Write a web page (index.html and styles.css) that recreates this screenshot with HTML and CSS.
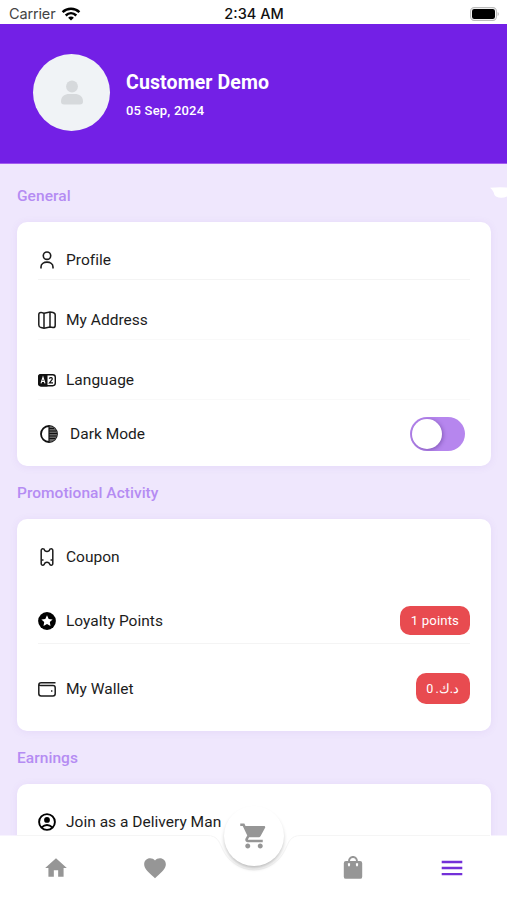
FILE: index.html
```html
<!DOCTYPE html>
<html lang="en">
<head>
<meta charset="utf-8">
<title>Menu</title>
<link rel="stylesheet" href="styles.css">
</head>
<body>
<div class="app">
  <div class="status">
    <div class="carrier"><span>Carrier</span>
      <svg width="20" height="14" viewBox="0 0 20 14" fill="none" stroke="#000" stroke-width="2.5"><path d="M1.6 5.1C6.300 .600 13.700 .600 18.400 5.100M4.700 8.500C7.800 5.600 12.200 5.600 15.300 8.500"/><path d="M7.100 10.700C8.700 9.100 11.300 9.100 12.900 10.700L10 13.500Z" fill="#000" stroke="none"/></svg>
    </div>
    <span class="time">2:34 AM</span>
    <svg class="battery" width="29" height="14" viewBox="0 0 29 14"><rect x=".6" y=".6" width="25.800" height="12.800" rx="3.600" fill="#fff" stroke="#bbb" stroke-width="1.100"/><rect x="2" y="2" width="23" height="10" rx="2.200"/><path d="M27.600 5v4q1.300-.7 1.300-2t-1.300-2z" fill="#bbb"/></svg>
  </div>
  <header class="header">
    <div class="avatar">
      <svg width="24" height="26" viewBox="0 0 24 26" fill="#d6d9dc"><circle cx="12" cy="6.500" r="5.900"/><path d="M1 21.500C1 16 5 14 9 14h6c4 0 8 2 8 7.500Q23 24.500 20 24.500H4Q1 24.500 1 21.500Z"/></svg>
    </div>
    <div>
      <div class="name">Customer Demo</div>
      <div class="date">05 Sep, 2024</div>
    </div>
  </header>
  <main class="main">
    <svg class="corner" width="17" height="12" viewBox="0 0 17 12" fill="#fff"><path d="M0 .8Q8 0 17 .5V9.500Q11 12 6 9.500Q4 8 3.500 5Q2 2 0 .8Z"/></svg>
    <h2 class="title">General</h2>
    <section class="card general">
      <div class="row line">
        <svg class="icon" viewBox="0 0 18 18" fill="none" stroke="#1c1c1c" stroke-width="1.600"><circle cx="9" cy="4.700" r="3.700"/><path d="M3 17.500V16C3 9.500 15 9.500 15 16v1.500"/></svg>
        <span>Profile</span>
      </div>
      <div class="row line faint">
        <svg class="icon" viewBox="0 0 18 18" fill="none" stroke="#1c1c1c" stroke-width="1.500" stroke-linejoin="round"><path d="M.8 3.500Q.8 1.500 3 1.400L6 2.200L12 1L15 1.500Q17.200 2 17.200 4V14.500Q17.200 16.600 15 16.600L12 16L6 17.200L3 16.600Q.8 16 .8 14Z"/><path d="M6 2.200V17M12 1V16"/></svg>
        <span>My Address</span>
      </div>
      <div class="row line faint">
        <svg class="icon" viewBox="0 0 18 18" fill="none"><rect x=".7" y="3.700" width="16.600" height="11" rx="2.600" stroke="#111" stroke-width="1.400"/><path d="M9.500 3H3Q0 3 0 6v6.500Q0 15.400 3 15.400H9.500Z" fill="#111"/><path d="M3 12.300L5 6.300L7 12.300M3.700 10.500H6.300" stroke="#fff" stroke-width="1.100"/><path d="M11.300 7.600Q12 6.300 13.300 6.600Q15 7.300 13.800 9L11.500 11.800H15" stroke="#111" stroke-width="1.200"/></svg>
        <span>Language</span>
      </div>
      <div class="row dark">
        <svg class="icon" viewBox="0 0 18 18" fill="none"><circle cx="9" cy="9" r="8" stroke="#111" stroke-width="1.800"/><path d="M9 1V17A8 8 0 0 0 9 1Z" fill="#666"/><path d="M9 1V17M9 3.500h5M9 6h7M9 8.500h8M9 11h7.500M9 13.500h6" stroke="#111" stroke-width="1.200"/></svg>
        <span>Dark Mode</span>
        <div class="toggle"><div class="knob"></div></div>
      </div>
    </section>
    <h2 class="title promo-title">Promotional Activity</h2>
    <section class="card promo">
      <div class="row">
        <svg class="icon" viewBox="0 0 18 18" fill="none" stroke="#1c1c1c" stroke-width="1.500" stroke-linejoin="round"><path d="M3.200 2.500Q3.200 .7 5 .8Q6.200 .8 6.800 2.700Q9 4.200 11.200 2.700Q11.800 .8 13 .8Q14.800 .7 14.800 2.500V15.500Q14.800 17.300 13 17.200Q11.800 17 11.200 15.200Q9 13.500 6.800 15.200Q6.200 17 5 17.200Q3.200 17.300 3.200 15.500Z"/><path d="M3.500 12h2M12.500 12h2"/></svg>
        <span>Coupon</span>
      </div>
      <div class="row line points">
        <svg class="icon" viewBox="0 0 18 18"><circle cx="9" cy="9" r="8.900" fill="#000"/><path d="M9 3.300L10.700 6.900L14.600 7.400L11.800 10.100L12.500 14L9 12.100L5.500 14L6.200 10.100L3.400 7.400L7.300 6.900Z" fill="#fff"/></svg>
        <span>Loyalty Points</span>
        <span class="pill">1 points</span>
      </div>
      <div class="row wallet">
        <svg class="icon" viewBox="0 0 18 18" fill="none" stroke="#1c1c1c" stroke-width="1.500"><path d="M17.500 2.800H3.200Q.8 2.800 .8 5V13.500Q.8 16 3.200 16H15Q17.200 16 17.200 13.800V7.800Q17.200 5.600 15 5.600H2.800Q1 5.600 1 4.300"/><path d="M13 10.900h1.400"/></svg>
        <span>My Wallet</span>
        <span class="pill tall" dir="rtl">د.ك. 0</span>
      </div>
    </section>
    <h2 class="title earn-title">Earnings</h2>
    <section class="card earn">
      <div class="row">
        <svg class="icon" viewBox="0 0 18 18" fill="none" stroke="#000" stroke-width="1.900"><circle cx="9" cy="9" r="7.900"/><circle cx="9" cy="6.900" r="2.900" fill="#000" stroke="none"/><path d="M3.500 14.500Q9 9.500 14.500 14.500"/></svg>
        <span>Join as a Delivery Man</span>
      </div>
    </section>
  </main>
  <nav class="nav">
    <svg class="navbg" width="507" height="66" viewBox="0 0 507 66"><path d="M0 .5H207C218 .5 219 7 223 15C228 26 240 35 254 35S280 26 285 15C289 7 290 .5 301 .5H507V66H0Z" fill="#fff"/><path d="M17 .5H207C218 .5 219 7 223 15C228 26 240 35 254 35S280 26 285 15C289 7 290 .5 301 .5H490" fill="none" stroke="#f5f5f5"/></svg>
    <div class="fab"><svg width="30" height="30" viewBox="0 0 24 24" fill="#969696"><path d="M7 18c-1.100 0-1.990.9-1.990 2S5.900 22 7 22s2-.9 2-2-.9-2-2-2zM1 2v2h2l3.600 7.590-1.350 2.450c-.16.28-.25.61-.25.960 0 1.100.9 2 2 2h12v-2H7.420c-.14 0-.25-.11-.25-.25l.03-.12.9-1.630h7.450c.75 0 1.410-.41 1.750-1.030l3.580-6.490c.08-.14.12-.31.12-.48 0-.55-.45-1-1-1H5.210l-.94-2H1zm16 16c-1.100 0-1.990.9-1.990 2s.89 2 1.990 2 2-.9 2-2-.9-2-2-2z"/></svg></div>
    <div class="tabs">
      <svg viewBox="0 0 24 24"><path d="M10 20v-6h4v6h5v-8h3L12 3 2 12h3v8z"/></svg>
      <svg viewBox="0 0 24 24"><path d="M12 21.350l-1.450-1.320C5.400 15.360 2 12.280 2 8.500 2 5.420 4.420 3 7.500 3c1.740 0 3.410.81 4.500 2.090C13.090 3.810 14.760 3 16.500 3 19.580 3 22 5.420 22 8.500c0 3.780-3.400 6.860-8.550 11.540L12 21.350z"/></svg>
      <span></span>
      <svg viewBox="0 0 24 24"><path fill-rule="evenodd" d="M18.500 5.500H16.500C16.500 3 14.500 1 12 1S7.500 3 7.500 5.500H5.500Q3.500 5.500 3.500 7.500V20Q3.500 22 5.500 22H18.500Q20.500 22 20.500 20V7.500Q20.500 5.500 18.500 5.500ZM12 2.700Q14.500 2.700 14.800 5.500H9.200Q9.500 2.700 12 2.700ZM7.300 7.600H9.300V9.500Q8.300 11.800 7.300 9.500ZM14.700 7.600H16.700V9.500Q15.700 11.800 14.700 9.500Z"/></svg>
      <svg class="active" viewBox="0 0 24 24"><path d="M2.500 5.300h19v2.200h-19zM2.500 10.900h19v2.200h-19zM2.500 16.500h19v2.200h-19z"/></svg>
    </div>
  </nav>
</div>
</body>
</html>
```
FILE: styles.css
```css
* { box-sizing: border-box; }
body { margin: 0; font-family: Roboto, "Noto Sans", sans-serif; color: #1c1c1c; }
.app { position: relative; width: 507px; height: 900px; overflow: hidden; background: #efe7fd; }
.status { height: 24px; padding: 3px 8px 0 9px; background: #fff; display: grid; grid-template-columns: 1fr auto 1fr; align-items: center; font: 14.5px Inter, sans-serif; }
.carrier { display: flex; align-items: center; gap: 6px; color: #444; letter-spacing: -0.15px; }
.time { font-weight: 500; color: #111; }
.battery { justify-self: end; }
.header { height: 140px; padding: 0 33px 2px; display: flex; align-items: center; gap: 16px; background: #7320e6; color: #fff; border-bottom: 1px solid #a45cf0; }
.avatar { width: 77px; height: 77px; border-radius: 50%; background: #f0f3f6; display: flex; align-items: center; justify-content: center; }
.name { margin-top: 5px; font-size: 19.5px; font-weight: 700; line-height: 24px; letter-spacing: 0.12px; }
.date { margin-top: 7px; font-size: 13px; font-weight: 500; line-height: 18px; letter-spacing: 0.2px; }
.main { position: relative; padding: 5px 16px 0 17px; }
.corner { position: absolute; right: 0; top: 23px; }
.title { margin: 0; height: 53px; display: flex; align-items: center; font-size: 15.5px; font-weight: 500; color: #b58cf3; letter-spacing: 0.05px; }
.promo-title { letter-spacing: 0.03px; }
.card { background: #fff; border-radius: 10px; padding: 18px 21px 0; box-shadow: 0 1px 8px rgba(112, 60, 190, 0.08); }
.general { height: 244px; }
.promo { height: 212px; }
.earn { height: 120px; }
.row { height: 40px; margin-bottom: 20px; display: flex; align-items: center; gap: 10px; font-size: 15.5px; letter-spacing: 0.02px; border-bottom: 1px solid transparent; }
.line { border-bottom-color: #f4f4f4; }
.faint { border-bottom-color: #f9f9f9; }
.icon { width: 18px; height: 18px; flex: none; }
.dark { margin-top: -6px; padding: 0 5px 0 2px; gap: 12px; }
.toggle { margin-left: auto; width: 55px; height: 34px; padding: 2px; border-radius: 17px; background: #b686ee; overflow: hidden; }
.knob { width: 30px; height: 30px; border-radius: 50%; background: #fff; box-shadow: 1px 1px 4px rgba(50, 20, 100, 0.4); }
.points { height: 46px; margin-top: 21px; margin-bottom: 22px; }
.wallet { height: 46px; }
.pill { margin-left: auto; height: 29px; padding: 0 11px; display: flex; align-items: center; border-radius: 10px; background: #e84b50; color: #fff; font-size: 13.2px; letter-spacing: 0.12px; }
.tall { height: 31px; padding: 0 11px 0 10px; font-size: 12.5px; letter-spacing: 0; word-spacing: -1px; }
.nav { position: absolute; left: 0; right: 0; bottom: 0; height: 65px; }
.navbg { position: absolute; left: 0; top: 0; }
.fab { position: absolute; left: 224px; top: -29px; width: 60px; height: 60px; border-radius: 50%; background: #fff; box-shadow: 0 3px 4px -1px rgba(0, 0, 0, 0.3); display: flex; align-items: center; justify-content: center; }
.tabs { position: relative; height: 65px; padding: 1px 6px 0; display: grid; grid-template-columns: repeat(5, 1fr); align-items: center; justify-items: center; }
.tabs svg { width: 26px; height: 26px; fill: #969696; }
.tabs .active { fill: #7330d8; }
```
